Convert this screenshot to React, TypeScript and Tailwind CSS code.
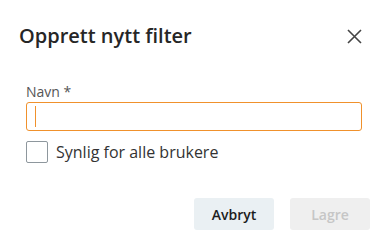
import React from 'react';

const App: React.FC = () => {
  return (
    <div
      className="w-[385px] h-[246px] bg-white px-[26px] pt-[24px] text-[#222]"
      style={{ fontFamily: '"Open Sans", "Noto Sans", sans-serif' }}
    >
      <div className="flex items-center justify-between -ml-[7px] -mr-[3px] h-[24px]">
        <h2 className="text-[20px] font-semibold leading-[24px] text-[#262626]">Opprett nytt filter</h2>
        <button className="w-[16px] h-[16px] flex items-center justify-center text-[#444]" aria-label="Lukk">
          <svg width="15" height="15" viewBox="0 0 15 15" fill="none" stroke="currentColor" strokeWidth="1.6">
            <path d="M1 1 L14 14 M14 1 L1 14" />
          </svg>
        </button>
      </div>

      <label className="block mt-[35px] text-[14px] leading-[18px] text-[#555]">Navn *</label>
      <div className="relative mt-[1px]">
        <input
          className="block w-[336px] h-[29px] rounded-[3px] border border-[#f0912c] outline-none px-2 text-[14px]"
        />
        <span className="absolute left-[9px] top-[4px] h-[21px] w-[1px] bg-[#f0912c]" />
      </div>

      <label className="flex items-center gap-[8px] mt-[10px]">
        <span className="w-[22px] h-[22px] rounded-[2px] border border-[#8e979d] bg-white" />
        <span className="text-[16px] leading-[22px] text-[#333]">Synlig for alle brukere</span>
      </label>

      <div className="flex justify-end gap-[16px] mt-[35px] -mr-[11px]">
        <button className="w-[80px] h-[32px] rounded-[3px] bg-[#eaf0f3] text-[14px] font-semibold text-[#1d1d1d]">
          Avbryt
        </button>
        <button disabled className="w-[80px] h-[32px] rounded-[3px] bg-[#efefef] text-[14px] font-semibold text-[#c6c6c6]">
          Lagre
        </button>
      </div>
    </div>
  );
};

export default App;
